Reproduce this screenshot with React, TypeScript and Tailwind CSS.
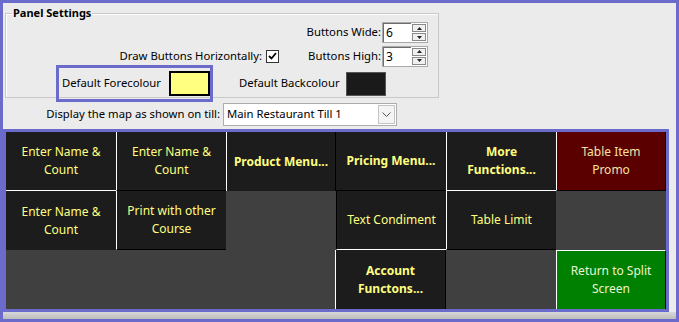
import React from "react";

type Cell = {
  text?: string;
  bold?: boolean;
  kind: "dark" | "empty" | "red" | "green";
  cls?: string;
};

const cells: Cell[] = [
  { text: "Enter Name & Count", kind: "dark", cls: "border-b border-b-white" },
  { text: "Enter Name & Count", kind: "dark", cls: "border-l border-l-white border-b border-b-black" },
  { text: "Product Menu...", bold: true, kind: "dark", cls: "border-l border-l-white border-r border-r-black" },
  { text: "Pricing Menu...", bold: true, kind: "dark", cls: "border-b border-b-black" },
  { text: "More Functions...", bold: true, kind: "dark", cls: "border-l border-l-white border-b border-b-white" },
  { text: "Table Item Promo", kind: "red", cls: "border-l border-l-white border-b border-b-black border-r border-r-black" },
  { text: "Enter Name & Count", kind: "dark", cls: "" },
  { text: "Print with other Course", kind: "dark", cls: "border-l border-l-white border-b border-b-black" },
  { kind: "empty" },
  { text: "Text Condiment", kind: "dark", cls: "border-l border-l-black border-b border-b-white" },
  { text: "Table Limit", kind: "dark", cls: "border-l border-l-white border-b border-b-black" },
  { kind: "empty" },
  { kind: "empty" },
  { kind: "empty" },
  { kind: "empty", cls: "border-r border-r-white" },
  { text: "Account Functons...", bold: true, kind: "dark", cls: "border-r border-r-black" },
  { kind: "empty" },
  { text: "Return to Split Screen", kind: "green", cls: "border-l border-l-white border-t border-t-white border-r border-r-black" },
];

function Spinner({ value }: { value: string }) {
  return (
    <div className="flex h-[21px] w-[46px] border border-[#a9a9a9] bg-white">
      <div className="flex flex-1 items-center border-l border-t border-l-[#6d6d6d] border-t-[#6d6d6d] pl-[2px] text-[12px] leading-none text-black">
        {value}
      </div>
      <div className="flex w-[16px] flex-col gap-[1px] p-[1px]">
        {[0, 1].map((i) => (
          <div
            key={i}
            className="flex flex-1 items-center justify-center border border-[#8a8a8a] bg-[#f0f0f0]"
          >
            <svg width="5" height="3" viewBox="0 0 5 3">
              {i === 0 ? (
                <path d="M2.5 0 L5 3 L0 3 Z" fill="#222" />
              ) : (
                <path d="M0 0 L5 0 L2.5 3 Z" fill="#222" />
              )}
            </svg>
          </div>
        ))}
      </div>
    </div>
  );
}

export default function App() {
  return (
    <div
      className="flex h-[322px] w-[679px] flex-col border-[3px] border-[#6b6bcc] bg-[#ebebeb] text-black"
      style={{ fontFamily: '"Noto Sans", "Open Sans", sans-serif' }}
    >
      {/* Top settings */}
      <div className="flex h-[123px] flex-col px-[2px] text-[11.3px]">
        <fieldset className="mt-[2px] h-[93px] w-[434px] border border-[#c9c9c9] px-0 pb-0 pt-0 shadow-[inset_1px_1px_0_#fff]">
          <legend className="ml-[6px] px-[1px] text-[11px] font-bold leading-[16px]">Panel Settings</legend>
          <div className="flex flex-col">
            <div className="mt-[1px] flex h-[21px] items-center justify-end pr-[10px]">
              <span className="mr-[1px]">Buttons Wide:</span>
              <Spinner value="6" />
            </div>
            <div className="mt-[2px] flex h-[22px] items-center pr-[10px]">
              <span className="w-[256px] text-right">Draw Buttons Horizontally:</span>
              <div className="ml-[4px] flex h-[13px] w-[13px] items-center justify-center border border-[#333] bg-white">
                <svg width="9" height="8" viewBox="0 0 9 8">
                  <path d="M1 4 L3.5 6.5 L8 1" stroke="#000" strokeWidth="1.8" fill="none" />
                </svg>
              </div>
              <span className="flex-1 pr-[1px] text-right">Buttons High:</span>
              <Spinner value="3" />
            </div>
            <div className="mt-[-2px] flex items-center">
              <div className="ml-[50px] flex h-[37px] w-[157px] items-center border-[3px] border-[#6b6bcc]">
                <span className="ml-[3px] w-[107px]">Default Forecolour</span>
                <div className="h-[25px] w-[41px] border-2 border-black bg-[#ffff80]" />
              </div>
              <span className="ml-[26px] w-[107px]">Default Backcolour</span>
              <div className="h-[24px] w-[40px] border border-[#555] bg-[#1a1a1a]" />
            </div>
          </div>
        </fieldset>
        <div className="mt-[5px] flex h-[23px] items-center">
          <span className="w-[215px] text-right">Display the map as shown on till:</span>
          <div className="ml-[3px] flex h-[23px] w-[174px] items-center border border-[#adadad] bg-white">
            <span className="flex-1 pl-[3px]">Main Restaurant Till 1</span>
            <div className="mr-[1px] flex h-[19px] w-[17px] items-center justify-center border border-[#c4c4c4] bg-[#f4f4f4]">
              <svg width="9" height="5" viewBox="0 0 9 5">
                <path d="M0.5 0.5 L4.5 4.5 L8.5 0.5" stroke="#555" strokeWidth="1" fill="none" />
              </svg>
            </div>
          </div>
        </div>
      </div>

      {/* Button grid */}
      <div className="mt-[3px] mr-[7px] border-[3px] border-[#6b6bcc]">
        <div className="grid h-[177px] grid-cols-6 grid-rows-3 bg-[#404040] text-[12px]">
          {cells.map((c, i) => {
            const bg =
              c.kind === "dark"
                ? "bg-[#1c1c1c]"
                : c.kind === "red"
                ? "bg-[#5a0000]"
                : c.kind === "green"
                ? "bg-[#008000]"
                : "bg-[#404040]";
            const color =
              c.kind === "red"
                ? "text-[#f5e3a0]"
                : c.kind === "green"
                ? "text-[#eef5d0]"
                : "text-[#ffff80]";
            return (
              <div
                key={i}
                className={`flex items-center justify-center px-[6px] text-center leading-[18px] ${bg} ${color} ${
                  c.bold ? "font-bold" : ""
                } ${c.cls ?? ""}`}
              >
                {c.text}
              </div>
            );
          })}
        </div>
      </div>
      <div className="flex-1 bg-gradient-to-b from-[#d8d8d8] to-[#bdbdbd]" />
    </div>
  );
}
